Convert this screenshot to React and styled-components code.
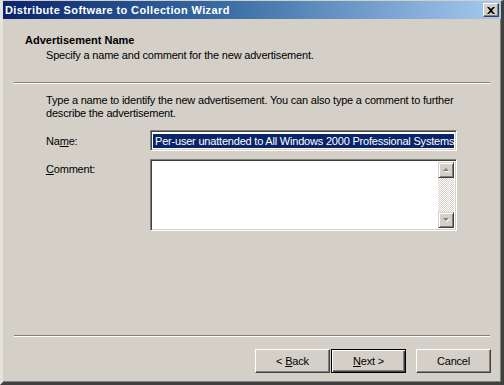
import React from "react";
import styled, { createGlobalStyle } from "styled-components";

const Global = createGlobalStyle`
  html, body { margin: 0; padding: 0; background: #d4d0c8; }
  body { font-family: "Liberation Sans", Arial, sans-serif; font-size: 11px; color: #000; letter-spacing: -0.2px; }
`;

const Window = styled.div`
  width: 504px;
  height: 385px;
  box-sizing: border-box;
  background: #d4d0c8;
  border-left: 3px solid #e4e2dc;
  border-top: 1px solid #d4d0c8;
  border-right: 3px solid #404040;
  border-bottom: 3px solid #404040;
  box-shadow: inset -1px -1px 0 #808080;
  display: flex;
  flex-direction: column;
  overflow: hidden;
`;

const TitleBar = styled.div`
  height: 18px;
  flex: none;
  background: linear-gradient(to right, #0a246a 0%, #3a6ea5 45%, #a6caf0 100%);
  display: flex;
  align-items: center;
  justify-content: space-between;
  padding: 0 2px 0 2px;
`;

const TitleText = styled.span`
  color: #fff;
  font-weight: bold;
  font-size: 11px;
  font-family: "Liberation Sans", Arial, sans-serif;
  letter-spacing: 0.38px;
`;

const CloseButton = styled.div`
  width: 16px;
  height: 14px;
  box-sizing: border-box;
  background: #d4d0c8;
  border-top: 1px solid #fff;
  border-left: 1px solid #fff;
  border-right: 1px solid #404040;
  border-bottom: 1px solid #404040;
  box-shadow: inset -1px -1px 0 #808080;
  display: flex;
  align-items: center;
  justify-content: center;
`;

const Header = styled.div`
  padding: 15px 0 0 22px;
  height: 63px;
  flex: none;
  box-sizing: border-box;
`;

const HeaderTitle = styled.div`
  font-weight: bold;
  line-height: 13px;
  letter-spacing: 0;
`;

const HeaderSub = styled.div`
  padding-left: 21px;
  line-height: 13px;
  margin-top: 2px;
`;

const Separator = styled.div`
  flex: none;
  margin: 0 11px;
  height: 0;
  border-top: 1px solid #808080;
  border-bottom: 1px solid #fff;
`;

const Body = styled.div`
  flex: 1;
  padding: 10px 44px 0 43px;
`;

const Intro = styled.p`
  margin: 0 -10px 0 0;
  line-height: 13px;
`;

const FormRow = styled.div`
  display: grid;
  grid-template-columns: 104px 1fr;
  align-items: start;
  margin-top: ${(p) => p.$top}px;
`;

const Label = styled.label`
  line-height: 13px;
  padding-top: ${(p) => p.$pad}px;
`;

const sunken = `
  box-sizing: border-box;
  background: #fff;
  border-top: 1px solid #808080;
  border-left: 1px solid #808080;
  border-right: 1px solid #fff;
  border-bottom: 1px solid #fff;
  box-shadow: inset 1px 1px 0 #404040, inset -1px -1px 0 #d4d0c8;
`;

const TextBox = styled.div`
  ${sunken}
  height: 21px;
  padding: 3px 2px 2px 2px;
  display: flex;
  align-items: stretch;
`;

const Selected = styled.span`
  background: #0a246a;
  color: #fff;
  flex: 1;
  line-height: 14px;
  padding-left: 2px;
  white-space: nowrap;
  overflow: hidden;
`;

const TextArea = styled.div`
  ${sunken}
  height: 72px;
  padding: 2px;
  display: flex;
  justify-content: flex-end;
`;

const ScrollBar = styled.div`
  width: 16px;
  display: flex;
  flex-direction: column;
  justify-content: space-between;
  background: repeating-conic-gradient(#d4d0c8 0 25%, #ffffff 0 50%) 0 0 / 2px 2px;
`;

const ArrowButton = styled.div`
  width: 16px;
  height: 16px;
  box-sizing: border-box;
  background: #d4d0c8;
  border-top: 1px solid #d4d0c8;
  border-left: 1px solid #d4d0c8;
  border-right: 1px solid #404040;
  border-bottom: 1px solid #404040;
  box-shadow: inset 1px 1px 0 #fff, inset -1px -1px 0 #808080;
  display: flex;
  align-items: center;
  justify-content: center;
`;

const ButtonRow = styled.div`
  flex: none;
  display: flex;
  justify-content: flex-end;
  padding: 12px 10px 9px 0;
`;

const Button = styled.button`
  width: 75px;
  height: 24px;
  box-sizing: border-box;
  margin-left: ${(p) => p.$gap}px;
  font-family: "Liberation Sans", Arial, sans-serif;
  font-size: 11px;
  letter-spacing: -0.2px;
  color: #000;
  background: #d4d0c8;
  padding: 0;
  border-top: 1px solid #fff;
  border-left: 1px solid #fff;
  border-right: 1px solid #404040;
  border-bottom: 1px solid #404040;
  box-shadow: inset -1px -1px 0 #808080;
  ${(p) =>
    p.$default &&
    `
    border: 1px solid #000;
    box-shadow: inset 1px 1px 0 #fff, inset -1px -1px 0 #404040, inset -2px -2px 0 #808080;
  `}
`;

const Arrow = ({ up }) => (
  <svg width="7" height="5" viewBox="0 0 7 5">
    {up ? (
      <>
        <polygon points="4,1 7,4 1,4" fill="#fff" />
        <polygon points="3,0 6,3 0,3" fill="#808080" />
      </>
    ) : (
      <>
        <polygon points="1,1 7,1 4,4" fill="#fff" />
        <polygon points="0,0 6,0 3,3" fill="#808080" />
      </>
    )}
  </svg>
);

export default function App() {
  return (
    <>
      <Global />
      <Window>
        <TitleBar>
          <TitleText>Distribute Software to Collection Wizard</TitleText>
          <CloseButton>
            <svg width="8" height="7" viewBox="0 0 8 7">
              <path d="M0 0h2l2 2 2-2h2L5 3.5 8 7H6L4 5 2 7H0l3-3.5z" fill="#000" />
            </svg>
          </CloseButton>
        </TitleBar>
        <Header>
          <HeaderTitle>Advertisement Name</HeaderTitle>
          <HeaderSub>Specify a name and comment for the new advertisement.</HeaderSub>
        </Header>
        <Separator />
        <Body>
          <Intro>
            Type a name to identify the new advertisement. You can also type a comment to further
            describe the advertisement.
          </Intro>
          <FormRow $top={10}>
            <Label $pad={5}>
              Na<u>m</u>e:
            </Label>
            <TextBox>
              <Selected>Per-user unattended to All Windows 2000 Professional Systems</Selected>
            </TextBox>
          </FormRow>
          <FormRow $top={8}>
            <Label $pad={4}>
              <u>C</u>omment:
            </Label>
            <TextArea>
              <ScrollBar>
                <ArrowButton>
                  <Arrow up />
                </ArrowButton>
                <ArrowButton>
                  <Arrow />
                </ArrowButton>
              </ScrollBar>
            </TextArea>
          </FormRow>
        </Body>
        <Separator />
        <ButtonRow>
          <Button $gap={0}>
            &lt; <u>B</u>ack
          </Button>
          <Button $gap={1} $default>
            <u>N</u>ext &gt;
          </Button>
          <Button $gap={10}>Cancel</Button>
        </ButtonRow>
      </Window>
    </>
  );
}
